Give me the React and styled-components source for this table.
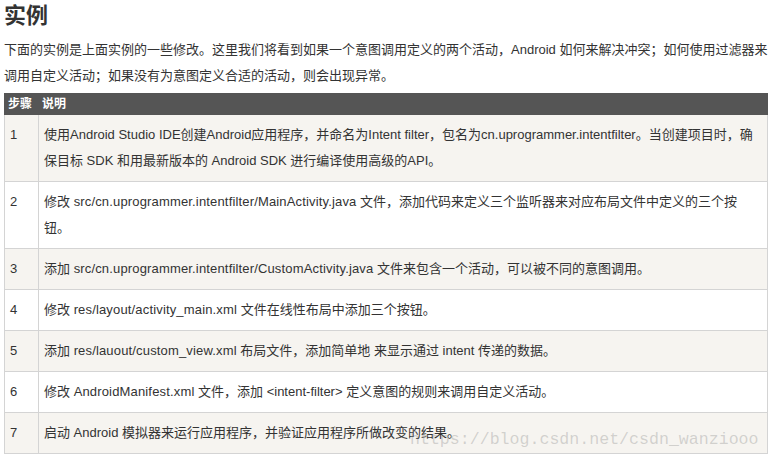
import React from "react";
import styled, { createGlobalStyle } from "styled-components";

const GlobalStyle = createGlobalStyle`
  html, body {
    margin: 0;
    padding: 0;
    background: #ffffff;
  }
  body {
    font-family: "Liberation Sans", "Noto Sans CJK SC", sans-serif;
    color: #333333;
  }
`;

const Page = styled.div`
  width: 764px;
  padding: 0 4px;
`;

const Title = styled.h2`
  margin: 0;
  font-size: 22px;
  line-height: 32px;
  font-weight: bold;
  color: #333333;
`;

const Intro = styled.p`
  margin: 5px 0 4px;
  font-size: 13px;
  line-height: 26px;
  color: #333333;
`;

const TableWrap = styled.div`
  position: relative;
`;

const Table = styled.table`
  width: 764px;
  border-collapse: collapse;
  table-layout: fixed;
  font-size: 13px;
`;

const Th = styled.th`
  background: #555555;
  color: #ffffff;
  border: 1px solid #555555;
  padding: 3px;
  font-size: 12px;
  line-height: 14px;
  font-weight: bold;
  text-align: left;
  vertical-align: top;
`;

const Row = styled.tr`
  background: ${(p) => (p.$odd ? "#f6f4f0" : "#ffffff")};
`;

const Td = styled.td`
  border: 1px solid #d4d4d4;
  padding: 7px 5px;
  line-height: 26px;
  color: #333333;
  vertical-align: top;
`;

const FilePath = styled.span`
  letter-spacing: 0.16px;
`;

const Watermark = styled.div`
  position: absolute;
  left: 406px;
  bottom: 4px;
  font-family: "Liberation Mono", monospace;
  font-size: 16.6px;
  line-height: 20px;
  color: rgba(140, 140, 140, 0.35);
  white-space: nowrap;
  pointer-events: none;
`;

const steps = [
  <>使用Android Studio IDE创建Android应用程序，并命名为Intent filter，包名为cn.uprogrammer.intentfilter。当创建项目时，确保目标 SDK 和用最新版本的 Android SDK 进行编译使用高级的API。</>,
  <>修改 <FilePath>src/cn.uprogrammer.intentfilter/MainActivity.java</FilePath> 文件，添加代码来定义三个监听器来对应布局文件中定义的三个按钮。</>,
  <>添加 <FilePath>src/cn.uprogrammer.intentfilter/CustomActivity.java</FilePath> 文件来包含一个活动，可以被不同的意图调用。</>,
  <>修改 <FilePath>res/layout/activity_main.xml</FilePath> 文件在线性布局中添加三个按钮。</>,
  <>添加 <FilePath>res/lauout/custom_view.xml</FilePath> 布局文件，添加简单地 来显示通过 intent 传递的数据。</>,
  <>修改 <FilePath>AndroidManifest.xml</FilePath> 文件，添加 &lt;intent-filter&gt; 定义意图的规则来调用自定义活动。</>,
  <>启动 Android 模拟器来运行应用程序，并验证应用程序所做改变的结果。</>,
];

export default function App() {
  return (
    <>
      <GlobalStyle />
      <Page>
        <Title>实例</Title>
        <Intro>
          下面的实例是上面实例的一些修改。这里我们将看到如果一个意图调用定义的两个活动，Android 如何来解决冲突；如何使用过滤器来调用自定义活动；如果没有为意图定义合适的活动，则会出现异常。
        </Intro>
        <TableWrap>
          <Table>
            <colgroup>
              <col style={{ width: "34px" }} />
              <col />
            </colgroup>
            <thead>
              <tr>
                <Th>步骤</Th>
                <Th>说明</Th>
              </tr>
            </thead>
            <tbody>
              {steps.map((s, i) => (
                <Row key={i} $odd={i % 2 === 0}>
                  <Td>{i + 1}</Td>
                  <Td>{s}</Td>
                </Row>
              ))}
            </tbody>
          </Table>
          <Watermark>https://blog.csdn.net/csdn_wanziooo</Watermark>
        </TableWrap>
      </Page>
    </>
  );
}
